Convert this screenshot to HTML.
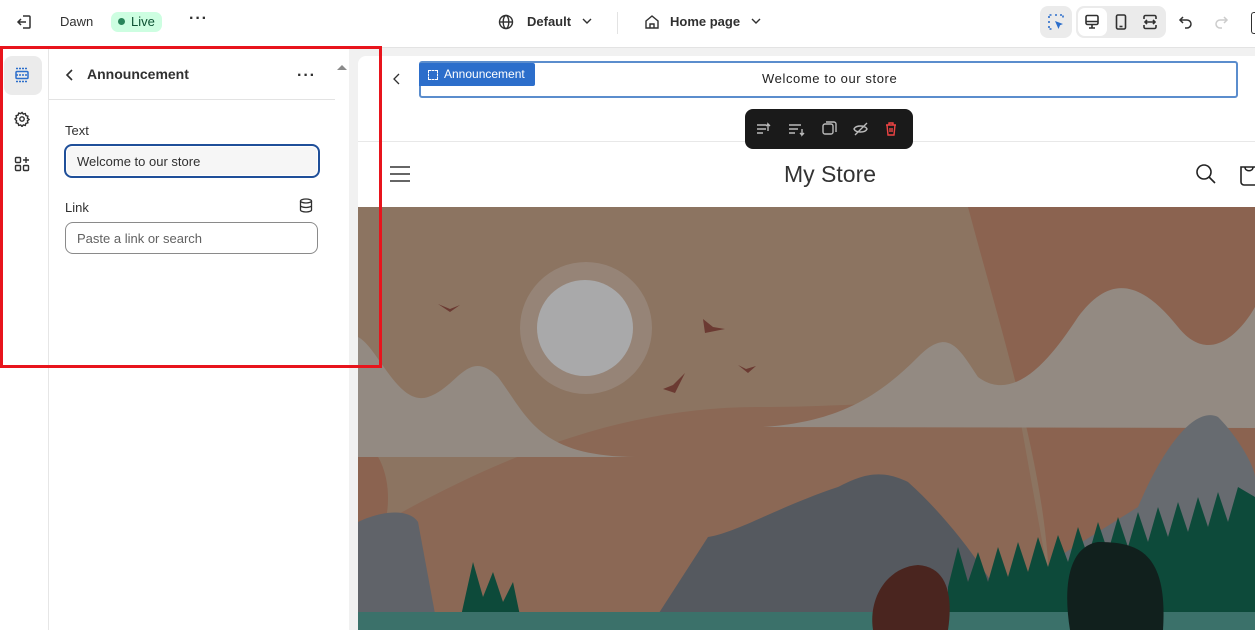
<!DOCTYPE html>
<html><head><meta charset="utf-8"><style>
*{box-sizing:border-box;margin:0;padding:0}
body{width:1255px;height:630px;overflow:hidden;background:#fff;font-family:"Liberation Sans","Noto Sans CJK SC",sans-serif;color:#303030;position:relative}
.abs{position:absolute}
.top{left:0;top:0;width:1255px;height:48px;background:#fff;border-bottom:1px solid #e3e3e3}
.side{left:0;top:48px;width:49px;height:582px;background:#fff;border-right:1px solid #e6e6e6}
.panel{left:49px;top:48px;width:300px;height:582px;background:#fff}
.gutter{left:349px;top:48px;width:9px;height:582px;background:#f1f1f1}
.prev{left:358px;top:48px;width:897px;height:582px;background:#f1f1f1}
.dots{font-size:16px;font-weight:bold;letter-spacing:1px;line-height:10px}
</style></head><body>
<div class="abs top">
  <svg class="abs" style="left:15px;top:13px" width="18" height="18" viewBox="0 0 18 18" fill="none" stroke="#303030" stroke-width="1.5"><path d="M8 3h6a1 1 0 0 1 1 1v10a1 1 0 0 1-1 1H8"/><path d="M11 9H3M6 6L3 9l3 3"/></svg>
  <div class="abs" style="left:60px;top:14px;font-size:13px">Dawn</div>
  <div class="abs" style="left:111px;top:12px;width:51px;height:20px;background:#cdfee1;border-radius:7px;font-size:13px;color:#0c5132;padding:2px 0 0 20px">Live</div>
  <div class="abs" style="left:118px;top:18px;width:7px;height:7px;border-radius:50%;background:#29845a"></div>
  <div class="abs dots" style="left:189px;top:14px">···</div>
  <svg class="abs" style="left:498px;top:14px" width="16" height="16" viewBox="0 0 16 16" fill="none" stroke="#303030" stroke-width="1.4"><circle cx="8" cy="8" r="6.5"/><ellipse cx="8" cy="8" rx="2.8" ry="6.5"/><path d="M1.5 8h13"/></svg>
  <div class="abs" style="left:527px;top:14px;font-size:13px;font-weight:bold">Default</div>
  <svg class="abs" style="left:582px;top:17px" width="10" height="8"><path d="M1 2l4 4 4-4" fill="none" stroke="#303030" stroke-width="1.4"/></svg>
  <div class="abs" style="left:617px;top:12px;width:1px;height:22px;background:#e3e3e3"></div>
  <svg class="abs" style="left:644px;top:14px" width="16" height="16" viewBox="0 0 16 16" fill="none" stroke="#303030" stroke-width="1.4"><path d="M2 7l6-5 6 5v7H2z"/><path d="M6 14v-4h4v4"/></svg>
  <div class="abs" style="left:670px;top:14px;font-size:13px;font-weight:bold">Home page</div>
  <svg class="abs" style="left:751px;top:17px" width="10" height="8"><path d="M1 2l4 4 4-4" fill="none" stroke="#303030" stroke-width="1.4"/></svg>
  <div class="abs" style="left:1040px;top:6px;width:32px;height:32px;background:#ebebeb;border-radius:8px"></div>
  <svg class="abs" style="left:1048px;top:14px" width="16" height="16" viewBox="0 0 16 16"><path d="M1 4V1h3M7 1h2M12 1h3v3M1 7v2M1 12v3h3" fill="none" stroke="#2c6ecb" stroke-width="1.6" stroke-dasharray="2 1.5"/><path d="M7 7l8 3-3 1.2L10.5 15z" fill="#2c6ecb"/></svg>
  <div class="abs" style="left:1076px;top:6px;width:90px;height:32px;background:#ebebeb;border-radius:8px"></div>
  <div class="abs" style="left:1078px;top:8px;width:29px;height:28px;background:#fff;border-radius:7px"></div>
  <svg class="abs" style="left:1084px;top:14px" width="16" height="16" viewBox="0 0 16 16" fill="none" stroke="#303030" stroke-width="1.6"><rect x="2" y="1.5" width="12" height="9" rx="1.5"/><path d="M2 7.5h12M8 10.5v3M5 14h6"/></svg>
  <svg class="abs" style="left:1113px;top:14px" width="16" height="16" viewBox="0 0 16 16" fill="none" stroke="#303030" stroke-width="1.6"><rect x="3.5" y="1" width="9" height="14" rx="1.5"/><path d="M6.5 12.5h3"/></svg>
  <svg class="abs" style="left:1142px;top:14px" width="16" height="16" viewBox="0 0 16 16" fill="none" stroke="#303030" stroke-width="1.6"><path d="M2 5V3a1.5 1.5 0 0 1 1.5-1.5h9A1.5 1.5 0 0 1 14 3v2M2 11v2a1.5 1.5 0 0 0 1.5 1.5h9A1.5 1.5 0 0 0 14 13v-2M3 8h10M5 6L3 8l2 2M11 6l2 2-2 2"/></svg>
  <svg class="abs" style="left:1178px;top:14px" width="16" height="16" viewBox="0 0 16 16" fill="none" stroke="#303030" stroke-width="1.5"><path d="M5 3L2 6l3 3"/><path d="M2 6h7a4 4 0 0 1 0 8H7"/></svg>
  <svg class="abs" style="left:1213px;top:14px" width="16" height="16" viewBox="0 0 16 16" fill="none" stroke="#ccc" stroke-width="1.5"><path d="M11 3l3 3-3 3"/><path d="M14 6H7a4 4 0 0 0 0 8h2"/></svg>
  <div class="abs" style="left:1251px;top:12px;width:4px;height:22px;border:1.5px solid #303030;border-right:none;border-radius:3px 0 0 3px"></div>
</div>
<div class="abs side">
  <div class="abs" style="left:4px;top:8px;width:38px;height:39px;background:#ebebeb;border-radius:8px"></div>
  <svg class="abs" style="left:14px;top:19px" width="16" height="16" viewBox="0 0 16 16" fill="none" stroke="#2c6ecb" stroke-width="1.5"><rect x="2" y="4.5" width="12" height="7" rx="1"/><path d="M2 1.5h12M2 14.5h12M2 8h12" stroke-dasharray="2 1"/></svg>
  <svg class="abs" style="left:14px;top:63px" width="16" height="16" viewBox="0 0 16 16" fill="none" stroke="#303030" stroke-width="1.4"><circle cx="8" cy="8" r="2.2"/><path d="M8 1.5l1.3 1.6 2-.5.6 2 2 .6-.5 2L15 8.5l-1.6 1.3.5 2-2 .6-.6 2-2-.5L8 15.5l-1.3-1.6-2 .5-.6-2-2-.6.5-2L1 8l1.6-1.3-.5-2 2-.6.6-2 2 .5z"/></svg>
  <svg class="abs" style="left:14px;top:108px" width="16" height="16" viewBox="0 0 16 16" fill="none" stroke="#303030" stroke-width="1.4"><rect x="1.5" y="1.5" width="5" height="5" rx="1"/><rect x="1.5" y="9.5" width="5" height="5" rx="1"/><rect x="9.5" y="9.5" width="5" height="5" rx="1"/><path d="M12 1v6M9 4h6"/></svg>
</div>
<div class="abs panel">
  <svg class="abs" style="left:16px;top:21px" width="10" height="12"><path d="M7 1L2 6l5 5" fill="none" stroke="#303030" stroke-width="1.6"/></svg>
  <div class="abs" style="left:38px;top:18px;font-size:14px;font-weight:bold">Announcement</div>
  <div class="abs dots" style="left:248px;top:23px">···</div>
  <div class="abs" style="left:0;top:51px;width:286px;height:1px;background:#e3e3e3"></div>
  <div class="abs" style="left:16px;top:75px;font-size:13px">Text</div>
  <div class="abs" style="left:15px;top:96px;width:256px;height:34px;border:2px solid #1f4f99;border-radius:8px;background:#f6f6f6;box-shadow:0 0 0 1px #fff inset"></div>
  <div class="abs" style="left:28px;top:106px;font-size:13px">Welcome to our store</div>
  <div class="abs" style="left:16px;top:152px;font-size:13px">Link</div>
  <svg class="abs" style="left:250px;top:150px" width="14" height="15" viewBox="0 0 14 15" fill="none" stroke="#303030" stroke-width="1.3"><ellipse cx="7" cy="3" rx="5.5" ry="2"/><path d="M1.5 3v9c0 1.1 2.5 2 5.5 2s5.5-.9 5.5-2V3M1.5 7.5c0 1.1 2.5 2 5.5 2s5.5-.9 5.5-2"/></svg>
  <div class="abs" style="left:16px;top:174px;width:253px;height:32px;border:1px solid #8a8a8a;border-radius:8px;background:#fff"></div>
  <div class="abs" style="left:28px;top:183px;font-size:13px;color:#616161">Paste a link or search</div>
</div>
<div class="abs gutter"></div>
<div class="abs" style="left:337px;top:58px"><svg width="10" height="7"><path d="M0 6l5-5 5 5z" fill="#8a8a8a"/></svg></div>
<div class="abs prev">
  <div class="abs" style="left:0;top:8px;width:897px;height:574px;background:#fff;border-radius:8px 0 0 0"></div>
  <svg class="abs" style="left:35px;top:25px" width="8" height="12"><path d="M6 1L1 6l5 5" fill="none" stroke="#303030" stroke-width="1.3"/></svg>
  <div class="abs" style="left:61px;top:13px;width:819px;height:37px;border:2px solid #5b8dcd;border-radius:3px"></div>
  <div class="abs" style="left:61px;top:15px;width:116px;height:23px;background:#2c6ecb;border-radius:2px 2px 2px 0;color:#fff;font-size:12px;padding:4px 0 0 25px">Announcement</div>
  <div class="abs" style="left:70px;top:22px;width:10px;height:10px;border:1.5px dashed #fff"></div>
  <div class="abs" style="left:404px;top:23px;font-size:13px;letter-spacing:.6px;color:#222">Welcome to our store</div>
  <div class="abs" style="left:0;top:93px;width:897px;height:1px;background:#e8e8e8"></div>
  <div class="abs" style="left:387px;top:61px;width:168px;height:40px;background:#1a1a1a;border-radius:8px"></div>
  <svg class="abs" style="left:397px;top:73px" width="150" height="16" viewBox="0 0 150 16" fill="none" stroke="#bbb" stroke-width="1.4"><path d="M2 4h9M2 8h9M2 12h6M13 10V3l2 2M13 3l-2 2"/><path d="M34 4h12M34 8h9M34 12h6M47 8v6l2-2M47 14l-2-2" /><rect x="68" y="3" width="10" height="10" rx="2"/><path d="M71 1h8a2 2 0 0 1 2 2v8M73 8h0"/><path d="M99 8c2-4 11-4 13 0-2 4-11 4-13 0zM100 14L112 2"/><path d="M131 4h10M134 4V2h4v2M132 4l1 10h6l1-10M135 7v4M137 7v4" stroke="#e44"/></svg>
  <svg class="abs" style="left:32px;top:117px" width="20" height="18"><path d="M0 2h20M0 9h20M0 16h20" stroke="#333" stroke-width="1.6"/></svg>
  <div class="abs" style="left:426px;top:113px;font-size:23px;color:#333">My Store</div>
  <svg class="abs" style="left:837px;top:115px" width="22" height="22" fill="none" stroke="#222" stroke-width="1.6"><circle cx="9" cy="9" r="7"/><path d="M14 14l6 6"/></svg>
  <svg class="abs" style="left:881px;top:113px" width="20" height="26" fill="none" stroke="#222" stroke-width="1.6"><path d="M2 6h18v18H5a3 3 0 0 1-3-3z"/><path d="M6 6c0 5 8 5 8 0"/></svg>
  <svg class="abs" style="left:0;top:159px" width="897" height="423" viewBox="0 0 897 423">
    <rect width="897" height="423" fill="#8c7461"/>
    <path d="M610 0h287v423H690C700 300 650 150 610 0z" fill="#8b6350"/>
    <path d="M0 230C40 250 40 330 0 360z" fill="#8b6350"/>
    <path d="M0 423V330C120 260 250 200 400 200 500 200 560 190 660 200L700 423z" fill="#8b6855"/>
    <circle cx="228" cy="121" r="66" fill="#9c8f86" opacity=".6"/>
    <circle cx="227" cy="121" r="48" fill="#a9a9aa"/>
    <path d="M405 220C480 215 520 190 560 150 590 120 600 140 620 170 660 200 700 140 720 110 750 70 780 70 820 120 860 170 897 100 897 100V221z" fill="#938a82"/>
    <path d="M0 130C20 140 40 200 70 190 100 180 110 140 140 170 170 210 180 250 280 250H0z" fill="#938a82"/>
    <path d="M80 97l12 5 10-4-10 7z M345 112l10 8 12 2-20 4z M380 158l8 4 10-3-8 7z M305 182l10-4 12-12-10 20z" fill="#6b3a32"/>
    <path d="M0 315C20 305 50 300 60 315L80 423H0z" fill="#606369"/>
    <path d="M290 423L350 330C380 325 420 300 480 280 500 270 520 260 550 275 600 320 640 380 660 423z" fill="#55595f"/>
    <path d="M650 423L700 350 780 300C810 230 840 200 860 210 880 230 897 260 897 270V423z" fill="#676b70"/>
    <path d="M105 400L115 355 125 390 135 365 145 395 155 375 165 423H100z M590 380L600 340 610 375 620 345 630 375 640 340 650 370 660 335 670 365 680 330 690 360 700 328 710 355 720 320 730 350 740 315 750 345 760 310 770 340 780 305 790 335 800 300 810 330 820 295 830 325 840 290 850 320 860 285 870 315 880 280 897 290V423H590z" fill="#0d4a3a"/>
    <rect x="0" y="405" width="897" height="20" fill="#3b716a"/>
    <path d="M515 423C510 390 530 360 560 358 590 360 595 390 590 423z" fill="#4a251f"/>
    <path d="M712 423C705 380 710 340 740 335 780 335 810 345 805 423z" fill="#11201d"/>
  </svg>
</div>
<div class="abs" style="left:0;top:46px;width:382px;height:322px;border:3px solid #e8141c"></div>
</body></html>
